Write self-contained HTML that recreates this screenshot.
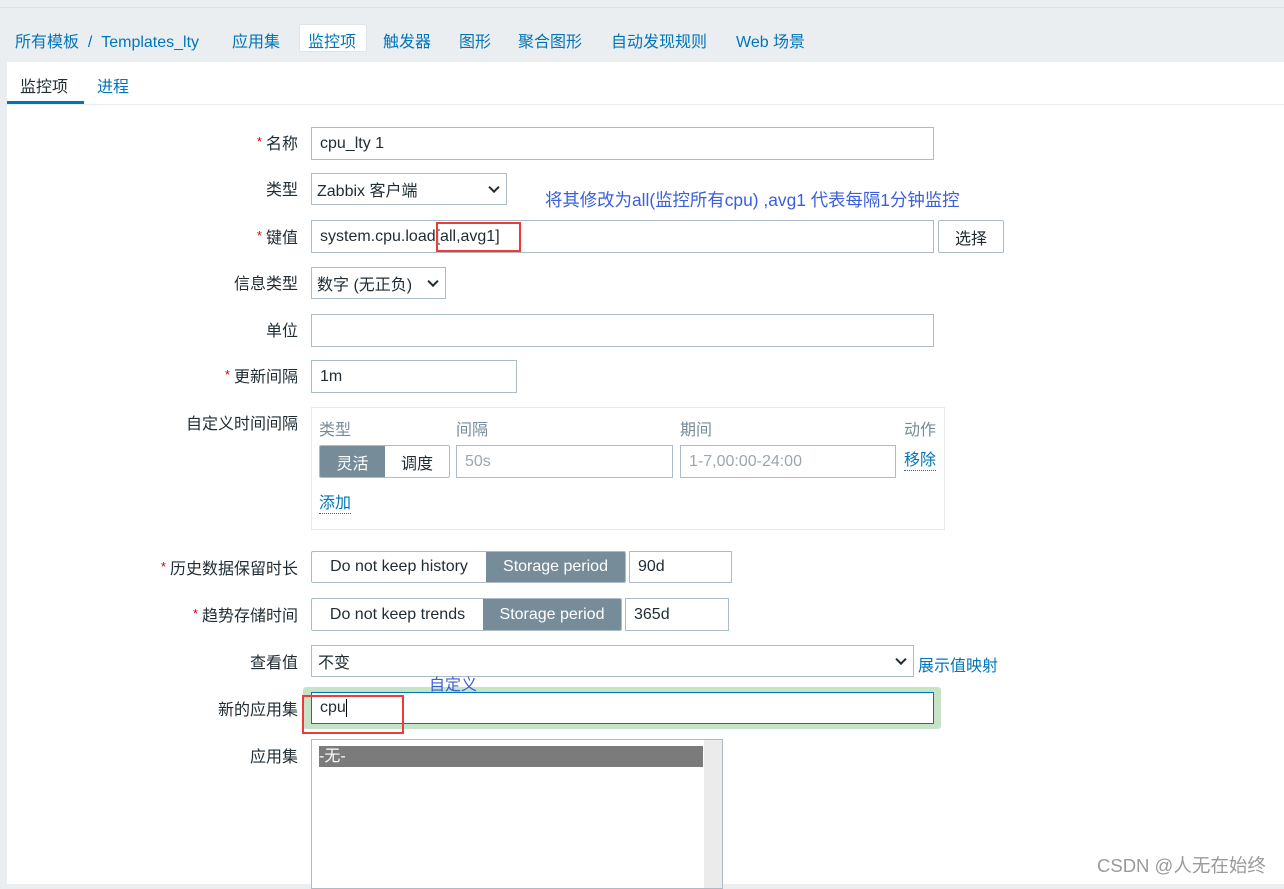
<!DOCTYPE html>
<html><head><meta charset="utf-8"><style>
*{box-sizing:border-box;margin:0;padding:0}
body{width:1284px;height:884px;overflow:hidden;background:#ebeef1;font-family:"Liberation Sans","Noto Sans CJK SC",sans-serif;font-size:16px;color:#1f2c33;position:relative}
.a{position:absolute;white-space:nowrap}
.nav{color:#0275b8;top:28px}
.panel{position:absolute;left:7px;top:62px;width:1277px;height:822px;background:#fff}
.lbl{position:absolute;right:986px;white-space:nowrap;margin-top:-3px}
.lbl b{color:#d40000;font-weight:normal;font-size:13px;margin-right:4px;position:relative;top:-3px}
.in{position:absolute;border:1px solid #acbbc4;background:#fff;padding-left:8px;display:flex;align-items:center}
.chev{position:absolute;right:8px;top:50%;width:8px;height:8px;border-right:2px solid #1f2c33;border-bottom:2px solid #1f2c33;transform:translateY(-70%) rotate(45deg)}
.gray{color:#768d99}
.lnk{color:#0275b8;border-bottom:1px dotted #0275b8;line-height:18px}
.seg{position:absolute;display:flex;border:1px solid #acbbc4;border-radius:2px;overflow:hidden}
.seg div{display:flex;align-items:center;justify-content:center}
.on{background:#768d99;color:#fff}
</style></head><body>
<div class="a" style="left:0;top:7px;width:1284px;height:1px;background:#dde2e6"></div>
<div class="a nav" style="left:15px">所有模板 &nbsp;/&nbsp; Templates_lty</div>
<div class="a nav" style="left:232px">应用集</div>
<div class="a" style="left:299px;top:24px;width:68px;height:28px;background:#fff;border:1px solid #dfe4e7;border-radius:2px"></div>
<div class="a nav" style="left:308px">监控项</div>
<div class="a nav" style="left:383px">触发器</div>
<div class="a nav" style="left:459px">图形</div>
<div class="a nav" style="left:518px">聚合图形</div>
<div class="a nav" style="left:611px">自动发现规则</div>
<div class="a nav" style="left:736px">Web 场景</div>
<div class="panel"></div>
<div class="a" style="left:20px;top:73px">监控项</div>
<div class="a" style="left:97px;top:73px;color:#0275b8">进程</div>
<div class="a" style="left:7px;top:101px;width:77px;height:3px;background:#0275b8"></div>
<div class="a" style="left:7px;top:104px;width:1277px;height:1px;background:#ebeef1"></div>

<div class="lbl" style="top:133px"><b>*</b>名称</div>
<div class="in" style="left:311px;top:127px;width:623px;height:33px">cpu_lty 1</div>
<div class="lbl" style="top:179px">类型</div>
<div class="in" style="left:311px;top:173px;width:196px;height:32px;padding-left:5px">Zabbix 客户端<span class="chev"></span></div>
<div class="a" style="left:545px;top:187px;color:#3a5fd8;font-size:17.4px">将其修改为all(监控所有cpu) ,avg1 代表每隔1分钟监控</div>
<div class="lbl" style="top:227px"><b>*</b>键值</div>
<div class="in" style="left:311px;top:220px;width:623px;height:33px">system.cpu.load[all,avg1]</div>
<div class="a" style="left:436px;top:222px;width:85px;height:30px;border:2px solid #ec3b3b"></div>
<div class="in" style="left:938px;top:220px;width:66px;height:33px;justify-content:center;padding:0;border-radius:2px">选择</div>
<div class="lbl" style="top:273px">信息类型</div>
<div class="in" style="left:311px;top:267px;width:135px;height:32px;padding-left:5px">数字 (无正负)<span class="chev"></span></div>
<div class="lbl" style="top:320px">单位</div>
<div class="in" style="left:311px;top:314px;width:623px;height:33px"></div>
<div class="lbl" style="top:366px"><b>*</b>更新间隔</div>
<div class="in" style="left:311px;top:360px;width:206px;height:33px">1m</div>
<div class="lbl" style="top:413px">自定义时间间隔</div>
<div class="a" style="left:311px;top:407px;width:634px;height:123px;border:1px solid #ebebeb"></div>
<div class="a gray" style="left:319px;top:416px">类型</div>
<div class="a gray" style="left:456px;top:416px">间隔</div>
<div class="a gray" style="left:680px;top:416px">期间</div>
<div class="a gray" style="left:904px;top:416px">动作</div>
<div class="seg" style="left:319px;top:445px;width:131px;height:33px"><div class="on" style="width:65px">灵活</div><div style="flex:1">调度</div></div>
<div class="in" style="left:456px;top:445px;width:217px;height:33px;color:#9aa7ae">50s</div>
<div class="in" style="left:680px;top:445px;width:216px;height:33px;color:#9aa7ae">1-7,00:00-24:00</div>
<div class="a lnk" style="left:904px;top:452px">移除</div>
<div class="a lnk" style="left:319px;top:495px">添加</div>

<div class="lbl" style="top:558px"><b>*</b>历史数据保留时长</div>
<div class="seg" style="left:311px;top:551px;width:315px;height:32px"><div style="width:174px">Do not keep history</div><div class="on" style="flex:1">Storage period</div></div>
<div class="in" style="left:629px;top:551px;width:103px;height:32px">90d</div>
<div class="lbl" style="top:605px"><b>*</b>趋势存储时间</div>
<div class="seg" style="left:311px;top:598px;width:311px;height:33px"><div style="width:171px">Do not keep trends</div><div class="on" style="flex:1">Storage period</div></div>
<div class="in" style="left:625px;top:598px;width:104px;height:33px">365d</div>
<div class="lbl" style="top:652px">查看值</div>
<div class="in" style="left:311px;top:645px;width:603px;height:32px;padding-left:6px">不变<span class="chev"></span></div>
<div class="a" style="left:918px;top:652px;color:#0275b8">展示值映射</div>
<div class="a" style="left:303px;top:687px;width:638px;height:42px;background:#c5e3c7;border-radius:3px"></div>
<div class="in" style="left:311px;top:692px;width:623px;height:32px;border-color:#0275b8">cpu<span style="display:inline-block;width:1px;height:18px;background:#000"></span></div>
<div class="a" style="left:429px;top:671px;color:#3a5fd8">自定义</div>
<div class="a" style="left:302px;top:695px;width:102px;height:39px;border:2px solid #ec3b3b"></div>
<div class="lbl" style="top:699px">新的应用集</div>
<div class="lbl" style="top:746px">应用集</div>
<div class="a" style="left:311px;top:739px;width:412px;height:150px;border:1px solid #acbbc4;background:#fff"></div>
<div class="a" style="left:704px;top:740px;width:18px;height:148px;background:#ebebeb"></div>
<div class="a" style="left:319px;top:746px;width:384px;height:21px;background:#7b7b7b;color:#fff;line-height:22px">-无-</div>
<div class="a" style="left:1097px;top:852px;color:#9a9a9a;font-size:18.5px">CSDN @人无在始终</div>
</body></html>
